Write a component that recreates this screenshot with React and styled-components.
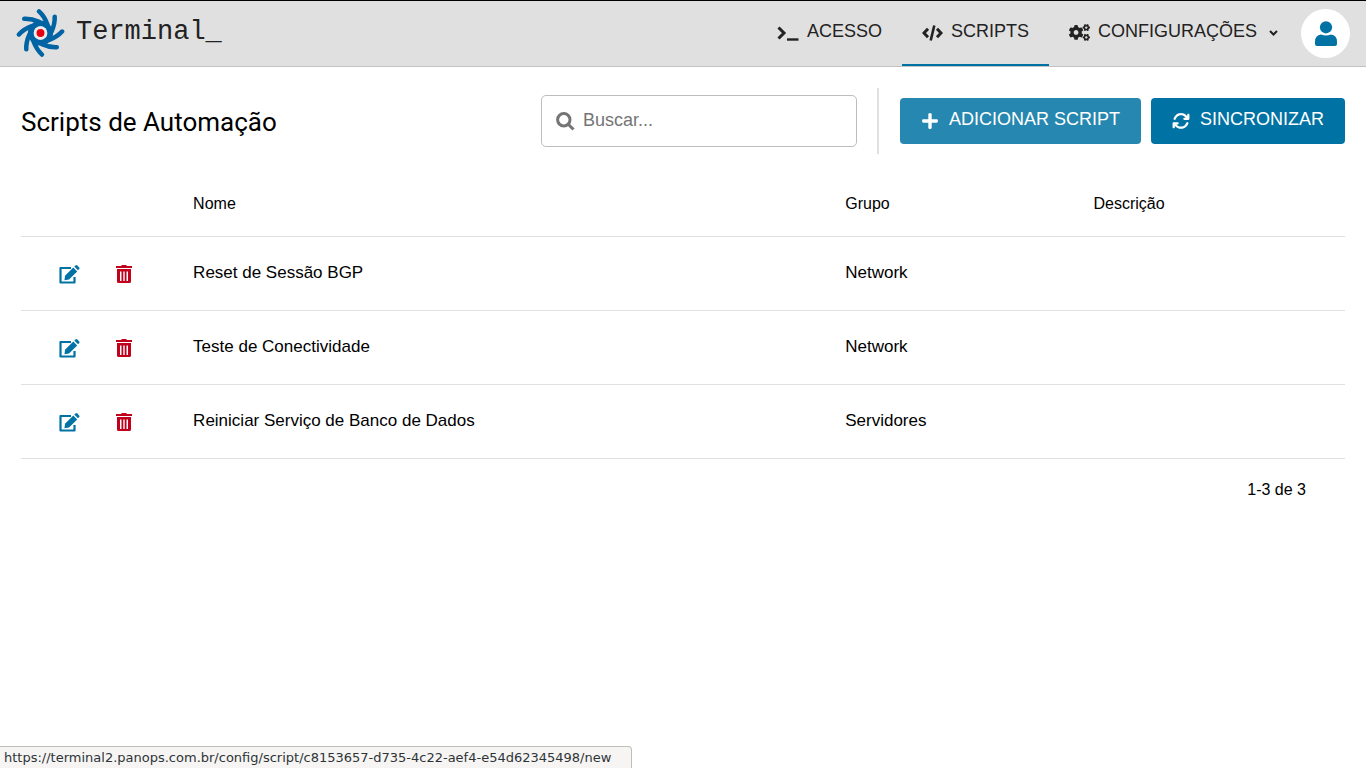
import React from "react";
import styled, { createGlobalStyle } from "styled-components";
import { FaCogs, FaPlus } from "react-icons/fa";
import { FaArrowsRotate } from "react-icons/fa6";

const SCRIPTS = [
  { id: 1, name: "Reset de Sessão BGP", group: "Network", description: "" },
  { id: 2, name: "Teste de Conectividade", group: "Network", description: "" },
  { id: 3, name: "Reiniciar Serviço de Banco de Dados", group: "Servidores", description: "" },
];

const LOGO_ARMS = [0, 45, 90, 135, 180, 225, 270, 315];

const GlobalStyle = createGlobalStyle`
  * {
    box-sizing: border-box;
  }

  body {
    margin: 0;
    color: #000;
    background: #fff;
    font-family: "Liberation Sans", Arial, sans-serif;
    font-size: 16px;
  }
`;

const Header = styled.header`
  display: flex;
  align-items: center;
  justify-content: space-between;
  height: 67px;
  padding: 0 16px;
  background: #e0e0e0;
  border-top: 1px solid #000;
  border-bottom: 1px solid #c2c2c2;
`;

const Brand = styled.a`
  display: flex;
  align-items: center;
  gap: 11px;
  color: #222;
  font-family: "Liberation Mono", monospace;
  font-size: 27px;
  line-height: 34px;
  text-decoration: none;
`;

const BrandName = styled.span`
  padding-bottom: 4px;
`;

const Nav = styled.nav`
  display: flex;
  align-items: center;
  height: 100%;
`;

const NavLink = styled.a`
  display: flex;
  align-items: center;
  gap: 8px;
  height: 65px;
  padding: 0 20px;
  color: #222;
  font-size: 18px;
  text-decoration: none;
  border-bottom: 2px solid ${({ $active }) => ($active ? "#0072a3" : "transparent")};
`;

const Label = styled.span`
  padding-bottom: 3px;
`;

const Chevron = styled.svg`
  margin-left: 4px;
`;

const Avatar = styled.button`
  display: flex;
  align-items: center;
  justify-content: center;
  width: 49px;
  height: 49px;
  margin-left: 3px;
  padding: 0;
  color: #0072a3;
  background: #fff;
  border: none;
  border-radius: 50%;
  cursor: pointer;
`;

const Main = styled.main`
  padding: 21px;
`;

const Toolbar = styled.div`
  display: flex;
  align-items: center;
  height: 66px;
`;

const Title = styled.h1`
  flex: 1;
  margin: 0;
  padding-top: 2px;
  font-family: Roboto, sans-serif;
  font-size: 26px;
  font-weight: 400;
`;

const SearchBox = styled.label`
  display: flex;
  align-items: center;
  gap: 8px;
  width: 316px;
  height: 52px;
  padding: 0 14px;
  color: #757575;
  border: 1px solid #bdbdbd;
  border-radius: 5px;
`;

const SearchInput = styled.input`
  flex: 1;
  min-width: 0;
  padding: 0 0 2px;
  font-family: inherit;
  font-size: 18px;
  background: none;
  border: none;
  outline: none;

  &::placeholder {
    color: #757575;
  }
`;

const Actions = styled.div`
  display: flex;
  align-items: center;
  gap: 10px;
  height: 100%;
  margin-left: 20px;
  padding-left: 21px;
  border-left: 2px solid #e0e0e0;
`;

const Button = styled.button`
  display: flex;
  align-items: center;
  gap: 10px;
  height: 46px;
  padding: 0 21px;
  color: #fff;
  font-family: inherit;
  font-size: 18px;
  background: ${({ $hovered }) => ($hovered ? "#2687b0" : "#0072a3")};
  border: none;
  border-radius: 4px;
  cursor: pointer;
`;

const Table = styled.table`
  width: 100%;
  margin-top: 16px;
  table-layout: fixed;
  border-collapse: collapse;
`;

const HeadCell = styled.th`
  width: ${({ $width }) => $width};
  height: 66px;
  padding: 3px 0 0;
  font-size: 16px;
  font-weight: 400;
  text-align: left;
  border-bottom: 1px solid #e0e0e0;
`;

const Cell = styled.td`
  height: 74px;
  padding: 0;
  font-size: 17px;
  border-bottom: 1px solid #e0e0e0;
`;

const RowActions = styled.div`
  display: flex;
  align-items: center;
  gap: 36px;
  padding: 2px 0 0 38px;
`;

const IconButton = styled.button`
  display: flex;
  padding: 0;
  color: ${({ $danger }) => ($danger ? "#c1001c" : "#0072a3")};
  background: none;
  border: none;
  cursor: pointer;
`;

const Pagination = styled.div`
  padding: 22px 39px;
  line-height: 18px;
  text-align: right;
`;

const StatusBar = styled.div`
  position: fixed;
  bottom: 0;
  left: 0;
  height: 22px;
  padding: 0 20px 0 4px;
  color: #2e3436;
  font-family: "DejaVu Sans", sans-serif;
  font-size: 13px;
  line-height: 21px;
  background: #f6f5f4;
  border: 1px solid #c0bfbc;
  border-width: 1px 1px 0 0;
  border-radius: 0 4px 0 0;
`;

function Logo() {
  return (
    <svg width="49" height="49" viewBox="-25 -24.500 50 50" aria-hidden="true">
      <circle r="9.800" fill="none" stroke="#0064a4" strokeWidth="6" />
      {LOGO_ARMS.map((angle) => (
        <path
          key={angle}
          d="M-1.500 -22Q4 -17 7 -9"
          transform={`rotate(${angle})`}
          fill="none"
          stroke="#0064a4"
          strokeWidth="4.600"
          strokeLinecap="round"
        />
      ))}
      <circle r="7" fill="#ececec" />
      <circle r="4" fill="#e60012" />
    </svg>
  );
}

function TerminalIcon() {
  return (
    <svg width="22" height="16" viewBox="0 0 22 16" fill="none" stroke="currentColor" strokeWidth="3" aria-hidden="true">
      <path d="M1.500 2.500L7 8L1.500 13.500" />
      <path d="M10 14.500H21.500" strokeWidth="2.400" />
    </svg>
  );
}

function CodeIcon() {
  return (
    <svg width="21" height="16" viewBox="0 0 21 16" fill="none" stroke="currentColor" strokeWidth="3" aria-hidden="true">
      <path d="M6 3.800L2 8L6 12.200M15 3.800L19 8L15 12.200" />
      <path d="M12.300 0.500L8.700 15.500" strokeWidth="2.600" />
    </svg>
  );
}

function UserIcon() {
  return (
    <svg width="22" height="25" viewBox="0 0 22 25" fill="currentColor" aria-hidden="true">
      <circle cx="11" cy="6.300" r="6.100" />
      <path d="M6 13.500Q11 15.500 16 13.500Q22 14.500 22 20.500V23Q22 25 20 25H2Q0 25 0 23V20.500Q0 14.500 6 13.500Z" />
    </svg>
  );
}

function SearchIcon() {
  return (
    <svg width="19" height="19" viewBox="0 0 19 19" fill="none" stroke="currentColor" strokeWidth="3" aria-hidden="true">
      <circle cx="7.800" cy="7.800" r="6.200" />
      <path d="M12 12L17.500 17.500" />
    </svg>
  );
}

function EditIcon() {
  return (
    <svg width="21" height="19" viewBox="0 0 21 19" fill="currentColor" aria-hidden="true">
      <path d="M12 3H1.500V17.500H15.500V12" fill="none" stroke="currentColor" strokeWidth="2.200" strokeLinejoin="round" />
      <path d="M14.300 2.500L18.200 6.400L10 14.500L5.500 15.200L6 10.800Z" />
      <path d="M15.300 1.600L16.500 0.400Q17.400 -0.300 18.300 0.500L20.200 2.400Q20.900 3.200 20.200 4L19 5.300Z" />
    </svg>
  );
}

function TrashIcon() {
  return (
    <svg width="16" height="18" viewBox="0 0 16 18" fill="currentColor" aria-hidden="true">
      <path d="M0 1H5L6 0H10L11 1H16V3H0Z" />
      <path
        fillRule="evenodd"
        d="M1 4H15V16.500Q15 18 13.500 18H2.500Q1 18 1 16.500ZM4 6.500V16H5.500V6.500ZM7.300 6.500V16H8.700V6.500ZM10.500 6.500V16H12V6.500Z"
      />
    </svg>
  );
}

function ChevronIcon() {
  return (
    <Chevron width="9" height="6" viewBox="0 0 9 6" fill="none" stroke="currentColor" strokeWidth="2" aria-hidden="true">
      <path d="M1 1L4.500 4.500L8 1" />
    </Chevron>
  );
}

function App() {
  return (
    <>
      <GlobalStyle />
      <Header>
        <Brand href="#">
          <Logo />
          <BrandName>Terminal_</BrandName>
        </Brand>
        <Nav>
          <NavLink href="#acesso">
            <TerminalIcon />
            <Label>ACESSO</Label>
          </NavLink>
          <NavLink href="#scripts" $active>
            <CodeIcon />
            <Label>SCRIPTS</Label>
          </NavLink>
          <NavLink href="#config">
            <FaCogs size={21} />
            <Label>CONFIGURAÇÕES</Label>
            <ChevronIcon />
          </NavLink>
          <Avatar aria-label="Usuário">
            <UserIcon />
          </Avatar>
        </Nav>
      </Header>
      <Main>
        <Toolbar>
          <Title>Scripts de Automação</Title>
          <SearchBox>
            <SearchIcon />
            <SearchInput type="text" placeholder="Buscar..." aria-label="Buscar" />
          </SearchBox>
          <Actions>
            <Button $hovered>
              <FaPlus size={18} />
              <Label>ADICIONAR SCRIPT</Label>
            </Button>
            <Button>
              <FaArrowsRotate size={18} />
              <Label>SINCRONIZAR</Label>
            </Button>
          </Actions>
        </Toolbar>
        <Table>
          <thead>
            <tr>
              <HeadCell $width="13%" aria-label="Ações" />
              <HeadCell>Nome</HeadCell>
              <HeadCell $width="18.75%">Grupo</HeadCell>
              <HeadCell $width="19%">Descrição</HeadCell>
            </tr>
          </thead>
          <tbody>
            {SCRIPTS.map((script) => (
              <tr key={script.id}>
                <Cell>
                  <RowActions>
                    <IconButton aria-label="Editar">
                      <EditIcon />
                    </IconButton>
                    <IconButton aria-label="Excluir" $danger>
                      <TrashIcon />
                    </IconButton>
                  </RowActions>
                </Cell>
                <Cell>{script.name}</Cell>
                <Cell>{script.group}</Cell>
                <Cell>{script.description}</Cell>
              </tr>
            ))}
          </tbody>
        </Table>
        <Pagination>1-3 de 3</Pagination>
      </Main>
      <StatusBar>https://terminal2.panops.com.br/config/script/c8153657-d735-4c22-aef4-e54d62345498/new</StatusBar>
    </>
  );
}

export default App;
